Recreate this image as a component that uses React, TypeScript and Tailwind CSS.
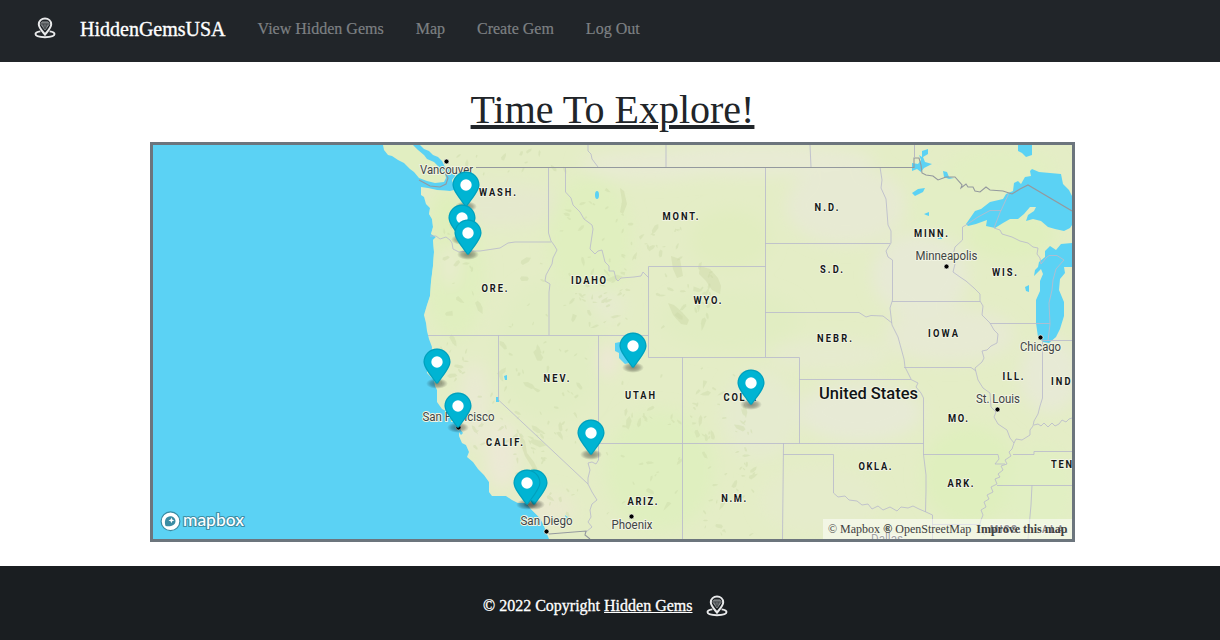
import React from "react";

const WATER = "#5bd2f4";

type Pt = [number, number];

const markers: Pt[] = [
  [466, 185], [462, 218], [468, 233], [437, 362], [458, 406],
  [633, 346], [751, 383], [591, 433], [534, 483], [527, 483],
];

const states: [string, number, number, number][] = [
  ["WASH.", 479, 196, 37], ["ORE.", 481.5, 292, 26], ["IDAHO", 571, 284, 35],
  ["MONT.", 662.5, 219.7, 36], ["WYO.", 693.5, 303.6, 28], ["N.D.", 814.5, 210.6, 24],
  ["S.D.", 820, 272.6, 23], ["NEBR.", 817, 342, 35], ["MINN.", 914, 237.3, 34],
  ["WIS.", 992, 276.3, 25], ["IOWA", 928, 336.8, 30], ["NEV.", 543.5, 381.7, 26],
  ["UTAH", 625, 399.3, 30], ["COLO.", 723.5, 400.7, 33], ["CALIF.", 486, 445.7, 37],
  ["ARIZ.", 627.5, 504.5, 30], ["N.M.", 721.3, 502.3, 25], ["OKLA.", 858.5, 470.3, 33],
  ["ARK.", 947.5, 486.8, 26], ["MO.", 948, 422.2, 20], ["ILL.", 1002.5, 380.2, 21],
  ["IND.", 1051, 385, 24], ["TENN.", 1051, 468.3, 34], ["MISS.", 990, 533, 31], ["ALA.", 1042, 533, 26],
];

const cities: [string, number, number, number, Pt][] = [
  ["Vancouver", 420, 174, 53, [446.5, 161.5]],
  ["San Francisco", 422.5, 421, 72, [458.5, 427.5]],
  ["San Diego", 520.5, 524.8, 52, [546.5, 531.5]],
  ["Phoenix", 611.5, 529.3, 41, [631.5, 516.5]],
  ["Minneapolis", 915.5, 260.2, 62, [946.5, 266.5]],
  ["Chicago", 1020, 351, 41, [1040.5, 337.5]],
  ["St. Louis", 976, 403, 44, [997.5, 409.5]],
  ["Dallas", 871, 543, 32, [887, 560]],
];

const borders = [
  "M588 145L588 151L591 154L592 159L598 167", "M666 145V167", "M810 145L811 167",
  "M548.5 167V233L551 241L554 245L557 250L553 258L552 264L546 275L545 281L550 284L549 292V335",
  "M430 236H436L440 239L446 237L450 240L452 243L453 249L459 252L468 251L480 251L500 248L508 243L515 242H551",
  "M428 335.5H648.5", "M498.5 335V400L588 484", "M598.5 335V460L596 464L592 462L588 463L590 470L588 478V484L592 492L597 500L592 504L590 510L591 517L588 522L592 527L586 532",
  "M565.5 167V192L571 198L573 205L580 212L584 219L592 225L593 229L590 249L595 254L598 251L602 250L605 262L609 266V271L614 271L616 279L618 281L621 278L634 277L641 276L643 272L649 278",
  "M765.5 266.5H648.5V357.5H799.5V443.5", "M765.5 167V357", "M765 243.5H890",
  "M765 312.5H859L866 317L871 315.5L883 316L892 323", "M682.5 357V539",
  "M598 443.5H923.5", "M799 379.5H911L918 383L916 387L921 393L923.5 398V454.5L926 475V490L925.5 512",
  "M783.5 443L782.5 539", "M783 454.5H833.5V493L838 497L845 496L849 500L857 501L862 505L868 504L872 509L878 506L883 510L890 507L897 511L901 507L908 508L913 506L919 509L926 512L932.5 515V539",
  "M923 454.5H998L999 459L995 464H1005",
  "M880 167L882 180L881 188L886 199L888 225L891 231V243L886 251L888 257L892.5 260V300L890 308L892 325L898 337L901 348L904 359L905 367L908 373L911 379",
  "M904 367.5H971L976 371", "M892 301.5H980",
  "M966 225L962.5 227V240L955 247L953 255L955 264L953 272L960 277L966 281L974 288L980 294L980 301L983 306L982 315L990 323L994 330L998 334L997 343L991 346L987 350L982 351L984 358L982 362L975 368L978 380L983 388L990 393L991 407L996 412L994 417L998 424L1007 430L1010 438L1014 443L1012 449L1009 452L1011 456L1005 460L1007 464L1001 466L1003 470L998 474L1000 477L995 479L997 484L991 487L993 492L987 495L989 499L984 502L986 507L981 510L983 515L981 520L979 528L985 535",
  "M990 323.5H1050", "M966 225L978 217L990 210.5H1001L1009 193", "M1001 210L994 228L1000 230L1002 234L1012 237L1020 241L1028 243L1033 247L1038 248L1037 254L1040 258L1041 264L1046 258L1049 255.5H1057L1064 260L1056 269L1053 280L1052 290L1049 303L1050 324L1048 341",
  "M1042.5 340V398L1040 406L1038 414L1034 421L1033 426L1030 430V435L1022 440L1016 439L1014 443",
  "M1034 425L1038 424L1041 426L1044 423L1048 427L1052 423L1055 426L1059 424L1062 420L1066 422L1069 419L1072 418", "M1013 454.5H1034V451.5H1072",
  "M997 485.5H1072", "M1032 485L1031 505L1028 539", "M932 524.5H980", "M1042 340.5H1072",
];

const shades: [number, number, number, number, string][] = [
  [455, 275, 30, 65, "#e0efbf"], [500, 205, 65, 22, "#e5e9cd"], [590, 240, 42, 65, "#e0efbf"],
  [590, 305, 35, 18, "#e6ebcf"], [650, 165, 70, 15, "#e8ebd3"], [760, 160, 115, 16, "#e8ebd4"],
  [846, 205, 60, 40, "#e7ead3"], [730, 240, 40, 30, "#e1edc0"], [920, 275, 48, 42, "#e7ead5"],
  [955, 205, 50, 35, "#e3eec5"], [1000, 170, 55, 22, "#e2efc2"], [1012, 235, 45, 24, "#e0efbe"],
  [1050, 375, 30, 38, "#e7ead5"], [950, 335, 65, 28, "#e7ead3"], [860, 412, 62, 30, "#e7ead5"],
  [760, 415, 38, 45, "#e5ebcf"], [830, 355, 60, 16, "#e6ebcf"], [660, 470, 55, 60, "#dfefbf"],
  [550, 350, 55, 70, "#e1edc3"], [475, 405, 15, 44, "#e9ead2"], [502, 455, 16, 35, "#ece9d5"],
  [607, 360, 7, 17, "#f1e5dc"], [970, 475, 48, 50, "#dfefbe"], [1040, 490, 35, 45, "#e1efc3"],
  [730, 320, 70, 30, "#e1edc2"], [820, 500, 60, 35, "#e5eccb"], [450, 220, 20, 30, "#dfefbb"],
  [545, 510, 30, 18, "#e9e9ce"], [450, 265, 8, 22, "#e9ebd0"],
];

const ranges: [number, number, number, number, number][] = [
  [455, 150, 110, 25, 14], [440, 215, 40, 112, 15], [490, 260, 140, 70, 28],
  [560, 175, 80, 145, 42], [640, 225, 45, 55, 16], [650, 285, 60, 42, 16],
  [695, 265, 28, 40, 10], [437, 338, 30, 60, 16], [470, 385, 36, 65, 14],
  [500, 342, 93, 105, 44], [511, 430, 36, 45, 18], [603, 375, 77, 62, 18],
  [687, 363, 65, 75, 32], [600, 450, 80, 65, 16], [690, 452, 68, 83, 22],
  [547, 482, 37, 38, 10], [735, 440, 20, 50, 8],
];

function buildShards(): string[] {
  let seed = 7321;
  const rnd = () => {
    seed = (seed * 16807) % 2147483647;
    return seed / 2147483647;
  };
  const out: string[] = [];
  for (const [x, y, w, h, n] of ranges) {
    for (let i = 0; i < n; i++) {
      const cx = x + rnd() * w;
      const cy = y + rnd() * h;
      const size = 2 + rnd() * rnd() * 7;
      const turn = rnd() * Math.PI;
      const pts: string[] = [];
      for (let k = 0; k < 6; k++) {
        const a = (k / 6) * Math.PI * 2;
        const r = size * (0.5 + rnd() * 0.7);
        const px = Math.cos(a) * r;
        const py = Math.sin(a) * r * 0.42;
        pts.push(
          `${(cx + px * Math.cos(turn) - py * Math.sin(turn)).toFixed(1)} ${(cy + px * Math.sin(turn) + py * Math.cos(turn)).toFixed(1)}`
        );
      }
      out.push(`M${pts.join("L")}Z`);
    }
  }
  return out;
}

const shards = buildShards();

function GemIcon() {
  return (
    <svg className="h-[22px] w-[22px] shrink-0" viewBox="0 0 22 22" fill="none" stroke="#e9eaeb">
      <path d="M6.4 14.4C3.2 14.8 1.5 15.8 1.5 17.1C1.5 19 5.7 20.2 11 20.2S20.5 19 20.5 17.1C20.5 15.8 18.8 14.8 15.6 14.4" strokeWidth="1.9" />
      <path d="M11 17.6C8.6 14.5 4.8 10.7 4.8 7.3C4.8 3.9 7.5 1.5 11 1.5S17.2 3.9 17.2 7.3C17.2 10.7 13.4 14.5 11 17.6Z" strokeWidth="2" />
      <path d="M8.1 4.9H13.9L15.3 7L11 13L6.7 7Z" fill="#6d7174" stroke="#9c9fa1" strokeWidth=".8" />
      <path d="M6.9 7H15.1M9.2 7L11 12.2L12.8 7" stroke="#3c4144" strokeWidth=".7" />
    </svg>
  );
}

function Pin({ at: [x, y] }: { at: Pt }) {
  return (
    <g transform={`translate(${x - 13.5} ${y - 13.5})`}>
      <ellipse cx="13.5" cy="35" rx="11" ry="5.4" fill="url(#pinShadow)" />
      <path d="M27 13.5C27 19.07 20.25 27 14.75 34.5C14.02 35.5 12.98 35.5 12.25 34.5C6.75 27 0 19.22 0 13.5C0 6.04 6.04 0 13.5 0S27 6.04 27 13.5Z" fill="#00b4d3" />
      <path d="M26.4 13.5C26.4 19 20 26.4 14.3 34.1C13.8 34.8 13.2 34.8 12.7 34.1C7 26.4 .6 19 .6 13.5C.6 6.4 6.4 .6 13.5 .6S26.4 6.4 26.4 13.5Z" fill="none" stroke="#006b80" strokeOpacity=".28" strokeWidth="1.1" />
      <circle cx="13.5" cy="13.5" r="5.7" fill="#fff" />
    </g>
  );
}

function GemMap() {
  return (
    <svg className="block h-full w-full" viewBox="153 145 919 394">
      <defs>
        <radialGradient id="pinShadow">
          <stop offset="0" stopColor="#000" stopOpacity=".42" />
          <stop offset=".6" stopColor="#000" stopOpacity=".25" />
          <stop offset="1" stopColor="#000" stopOpacity="0" />
        </radialGradient>
        <filter id="soft" x="-50%" y="-50%" width="200%" height="200%"><feGaussianBlur stdDeviation="8" /></filter>
        <clipPath id="landClip"><use href="#land" /></clipPath>
      </defs>
      <rect x="153" y="145" width="919" height="394" fill={WATER} />
      <path id="land" fill="#e4edc6" d="M420 145L424 149L429 151L433 155L438 157L442 161L445 167L450 167L454 170L455 176L452 180L455 190L457 194L456 205L459 206V194L455 190L450 191L437 190L428 188L421 187V195L424 197L426 204L430 208L429 214L432 219L433 227L431 234L436 237L433 240L434 252L433 266L431 282L430 296L427 305L424 315L426 323L427 331L429 339L432 347L431 358L427 366V373L434 380L435 386L437 390V402L442 409L448 412L453 418L455 424L459 431V436L462 443L466 445L469 452L467 457L473 462L478 469L484 475L489 482L489 492L492 496L506 496L512 500L518 503H526L531 509L540 518L544 526L547 534L549 539H1072V145Z" />
      <path fill="#e1eec1" d="M383 145H413L418 150L424 155L427 159L434 162L440 168L445 173L446 178L444 182L435 183L427 181L419 178L414 172L410 169L404 163L398 160L392 156L388 155L384 150Z" />
      <g clipPath="url(#landClip)">
        <g filter="url(#soft)">
          {shades.map(([x, y, rx, ry, c], i) => <ellipse key={i} cx={x} cy={y} rx={rx} ry={ry} fill={c} />)}
        </g>
        <path d={shards.join("")} fill="#cbd9a7" fillOpacity=".42" />
        <path fill="#ccd8a6" fillOpacity=".45" d="M700 266l10 3 8 9 3 8-1 8-8-4-6-9-7-7zM668 303l6 2 8 7 7 8-2 5-6-1-8-9zM620 188l4 3 3 13-4 10-3-2 2-11zM519 433l6 8 2 12 7 9 5 10-6-3-8-13-4-11zM671 256l9 3 3 17-6 2-4-9z" />
      </g>
      <g fill={WATER}>
        <path d="M966 224L975 211L981 209L990 202L1003 199L1006 194L1013 191L1014 183L1018 181L1021 184L1025 177L1031 176L1030 171L1032 169L1039 172L1061 174L1063 184L1069 190L1072 196V225L1070 228L1064 231L1055 229L1048 227L1041 221L1033 219L1026 221L1028 215L1034 211L1036 207L1030 207L1024 214L1018 219L1010 219L1003 223L995 228L986 226L987 220L976 224L968 226Z" />
        <path d="M1034 276L1035 270L1038 267L1039 262L1045 257L1045 251L1050 246L1056 250L1061 244L1072 243V267L1064 267L1065 273L1060 279L1059 290L1064 302V316L1060 329L1056 337L1049 343L1043 342L1038 337L1036 323L1036 300L1040 291L1040 281L1043 274L1041 269Z" />
        <path d="M1018 145H1032V155L1026 157L1022 153L1018 151ZM912 163L918 164L921 160L919 155L922 157L922 151L928 149V154L923 157L925 162L932 164L924 168L921 172L917 169L912 171ZM943 171L947 172L949 177L954 178L949 179L944 177ZM912 193L918 189L925 188L923 192L915 196ZM924 214L929 212V216L926 215ZM1025 287L1029 285V292L1026 291ZM938 236h4v3h-4ZM615 343L620 342V346L625 347V355L629 363L625 364L619 358V353L615 351ZM504 376L507 375V380H505ZM496 397H499V402H496ZM565 515L569 518L571 521L566 519ZM459 428L463 433L461 435L458 431Z" />
        <ellipse cx="597" cy="195" rx="2" ry="4" />
      </g>
      <path d={borders.join("")} fill="none" stroke="#b9bbcb" strokeWidth=".85" />
      <path d="M419 180L430 186L440 187L446 184L448 178L445 173M476 167.5H914V158L919 158L921 165L922 173L926 175L933 176L938 180L946 177H955L962 185L961 188L966 184L968 187L973 187L975 191L980 192L986 187L990 190L1003 191L1012 194L1020 189L1028 185L1072 211M549 534L586 531L585 535L590 539" fill="none" stroke="#94999e" strokeWidth="1.1" />
      <path d="M914.5 145V158" stroke="#b8bac2" />
      <g fontFamily="Roboto, 'Liberation Sans', sans-serif" stroke="#f1f4e2" strokeWidth="2" strokeLinejoin="round" paintOrder="stroke">
        {states.map(([t, x, y, w]) => (
          <text key={t} transform={`translate(${x} ${y}) scale(.87 1)`} textLength={w / 0.87} fontSize="10.7" fontWeight="700" fill="#151819">{t}</text>
        ))}
        {cities.map(([t, x, y, w]) => (
          <text key={t} x={x} y={y} textLength={w} lengthAdjust="spacingAndGlyphs" fontSize="12" fill="#414445">{t}</text>
        ))}
        <text x="819" y="398.5" textLength="99" lengthAdjust="spacingAndGlyphs" fontSize="17.2" fontWeight="500" fill="#111416">United States</text>
      </g>
      {cities.map(([t, , , , [x, y]]) => <circle key={t} cx={x} cy={y} r="2.5" fill="#000" stroke="#f5f6ec" strokeWidth=".7" />)}
      {markers.map((p, i) => <Pin key={i} at={p} />)}
      <g>
        <circle cx="170.5" cy="521.3" r="9.4" fill="#fff" stroke="#398aa2" strokeWidth="1.2" />
        <path d="M165.6 525.9C164.2 521.6 165.1 518.2 167.8 516.9C171.1 515.3 175.4 517.3 175.5 521C175.6 525.8 169.9 526.8 165.6 525.9Z" fill="#3b8ca3" />
        <path d="M171.4 517.5L172.2 519.6L174.3 520.4L172.2 521.2L171.4 523.3L170.6 521.2L168.5 520.4L170.6 519.6Z" fill="#fff" />
        <text x="183" y="526" textLength="61" lengthAdjust="spacingAndGlyphs" fontFamily="Lato, 'Open Sans', sans-serif" fontSize="16.5" fontWeight="500" fill="#fff" stroke="#3d8fa6" strokeWidth="2.2" strokeLinejoin="round" paintOrder="stroke">mapbox</text>
      </g>
    </svg>
  );
}

export default function App() {
  return (
    <div className="flex h-[640px] w-[1220px] flex-col overflow-hidden bg-white font-['Liberation_Serif',serif] text-[#212529]">
      <nav className="flex h-[62px] shrink-0 items-center bg-[#212529] pb-[5px] pl-[34px]">
        <span className="pb-px"><GemIcon /></span>
        <a className="ml-6 text-xl leading-[30px] text-white [-webkit-text-stroke:0.35px_white]">HiddenGemsUSA</a>
        <div className="ml-8 flex gap-8 text-base leading-6 text-[#7d8083] [-webkit-text-stroke:0.2px_#7d8083]">
          <a>View Hidden Gems</a>
          <a>Map</a>
          <a>Create Gem</a>
          <a>Log Out</a>
        </div>
      </nav>
      <main className="flex flex-1 flex-col items-center pl-[5px] pt-6">
        <h1 className="h-14 text-[40px] leading-12 underline">Time To Explore!</h1>
        <div className="relative h-[400px] w-[925px] border-3 border-[#6c757d]">
          <GemMap />
          <div className="absolute bottom-0 right-0 flex h-5 w-[249px] items-center whitespace-nowrap bg-white/50 pl-[5px] text-xs leading-5 text-[#404040]">
            <a>© Mapbox</a>
            <a className="relative ml-[3px]">©<span className="absolute left-0 top-0">®</span> OpenStreetMap</a>
            <a className="ml-[5px] font-bold">Improve this map</a>
          </div>
        </div>
      </main>
      <footer className="flex h-[74px] shrink-0 items-center bg-[#1a1e21] pl-[483px] pt-1.5 text-base leading-6 text-white [-webkit-text-stroke:0.3px_white]">
        <p>© 2022 Copyright <a className="underline">Hidden Gems</a></p>
        <span className="ml-3.5"><GemIcon /></span>
      </footer>
    </div>
  );
}
